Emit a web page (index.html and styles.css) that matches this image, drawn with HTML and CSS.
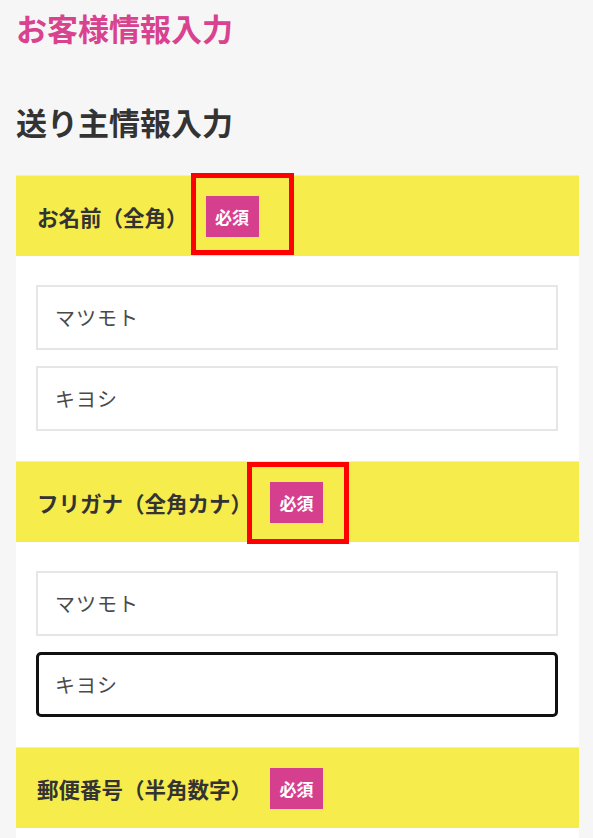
FILE: index.html
```html
<!DOCTYPE html>
<html lang="ja">
<head>
<meta charset="utf-8">
<title>お客様情報入力</title>
<link rel="stylesheet" href="styles.css">
</head>
<body>
<main class="page">
  <h1 class="page-title">お客様情報入力</h1>
  <h2 class="section-title">送り主情報入力</h2>
  <section class="card">
    <div class="field-head">
      <span class="field-label">お名前（全角）</span>
      <span class="badge mark-a">必須</span>
    </div>
    <div class="field-body">
      <input class="text-input" type="text" value="マツモト">
      <input class="text-input" type="text" value="キヨシ">
    </div>
    <div class="field-head">
      <span class="field-label">フリガナ（全角カナ）</span>
      <span class="badge mark-b">必須</span>
    </div>
    <div class="field-body">
      <input class="text-input" type="text" value="マツモト">
      <input class="text-input is-focused" type="text" value="キヨシ">
    </div>
    <div class="field-head">
      <span class="field-label">郵便番号（半角数字）</span>
      <span class="badge">必須</span>
    </div>
    <div class="field-body">
      <input class="text-input" type="text" value="">
    </div>
  </section>
</main>
</body>
</html>
```

FILE: styles.css
```css
html {
  overflow: hidden;
}
body {
  margin: 0;
  background: #f6f6f6;
  font-family: "Noto Sans CJK JP", "Noto Sans", sans-serif;
  color: #333;
}
.page {
  padding: 8px 14px 0 16px;
}
.page-title {
  margin: 0;
  font-size: 31px;
  line-height: 40px;
  font-weight: 700;
  color: #d9428f;
}
.section-title {
  margin: 54px 0 0;
  font-size: 31px;
  line-height: 40px;
  font-weight: 700;
  color: #333;
}
.card {
  margin-top: 33px;
  background: #fff;
}
.field-head {
  display: flex;
  align-items: center;
  height: 81px;
  box-sizing: border-box;
  padding-left: 21px;
  background: #f6ec4b;
  border-top: 1px solid #ecebe0;
}
.field-label {
  font-size: 21.5px;
  font-weight: 700;
  color: #333;
}
.badge {
  position: relative;
  display: flex;
  align-items: center;
  justify-content: center;
  width: 53px;
  height: 41px;
  margin-left: 18px;
  background: #d63e8e;
  color: #fff;
  font-size: 17px;
  font-weight: 700;
}
.mark-a::after,
.mark-b::after {
  content: "";
  position: absolute;
  border: 5px solid #ff0000;
  box-sizing: border-box;
}
.mark-a::after {
  left: -15px;
  top: -23px;
  width: 103px;
  height: 82px;
}
.mark-b::after {
  left: -23px;
  top: -20px;
  width: 102px;
  height: 82px;
}
.field-body {
  display: flex;
  flex-direction: column;
  gap: 16px;
  padding: 29px 21px 30px 20px;
}
.text-input {
  display: block;
  width: 100%;
  height: 65px;
  box-sizing: border-box;
  margin: 0;
  padding: 0 17px;
  border: 2px solid #e6e6e6;
  border-radius: 0;
  background: #fff;
  font-family: "Noto Sans CJK JP", "Noto Sans", sans-serif;
  font-size: 20px;
  letter-spacing: 1px;
  color: #4a4a4a;
  outline: none;
}
.text-input.is-focused {
  border: 3px solid #111;
  border-radius: 5px;
  padding: 0 16px;
}
```
